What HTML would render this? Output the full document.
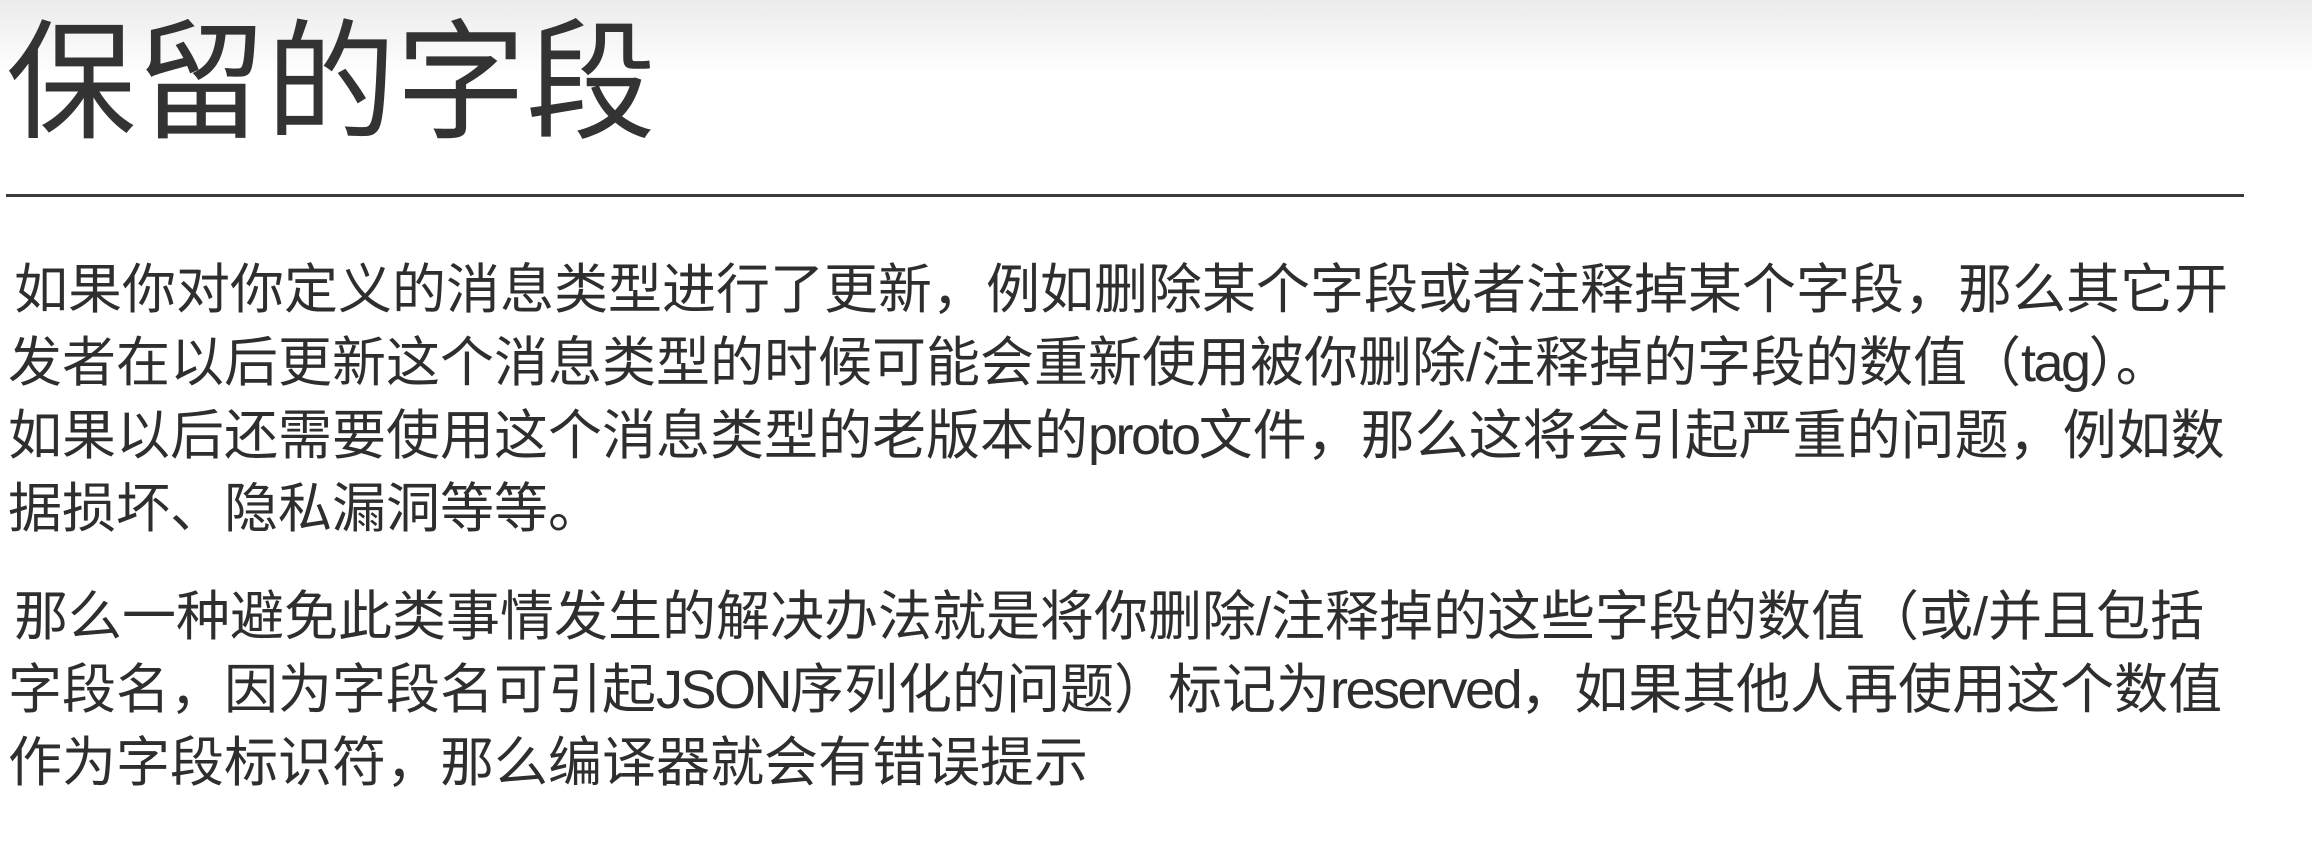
<!DOCTYPE html>
<html><head><meta charset="utf-8"><style>
html,body{margin:0;padding:0;}
body{width:2312px;height:866px;position:relative;overflow:hidden;background:linear-gradient(#ebebeb 0px,#f6f6f6 40px,#fff 75px,#fff 100%);font-family:"Liberation Sans","Noto Sans CJK SC",sans-serif;color:#2e2e2e;}
.t{position:absolute;left:6px;top:18px;font-size:130px;line-height:130px;white-space:nowrap;color:#333;}
.hr{position:absolute;left:6px;top:194px;width:2238px;height:3px;background:#3a3a3a;}
.p{position:absolute;left:8px;font-size:54px;line-height:73px;white-space:nowrap;}
.i{padding-left:6px;}
.l{letter-spacing:-2.5px;}
</style></head><body>
<div class="t">保留的字段</div>
<div class="hr"></div>
<div class="p" style="top:254px"><span class="i"></span>如果你对你定义的消息类型进行了更新，例如删除某个字段或者注释掉某个字段，那么其它开<br>发者在以后更新这个消息类型的时候可能会重新使用被你删除/注释掉的字段的数值（<span class="l">tag</span>）。<br>如果以后还需要使用这个消息类型的老版本的<span class="l">proto</span>文件，那么这将会引起严重的问题，例如数<br>据损坏、隐私漏洞等等。</div>
<div class="p" style="top:581px"><span class="i"></span>那么一种避免此类事情发生的解决办法就是将你删除/注释掉的这些字段的数值（或/并且包括<br>字段名，因为字段名可引起<span class="l">JSON</span>序列化的问题）标记为<span class="l">reserved</span>，如果其他人再使用这个数值<br>作为字段标识符，那么编译器就会有错误提示</div>
</body></html>
